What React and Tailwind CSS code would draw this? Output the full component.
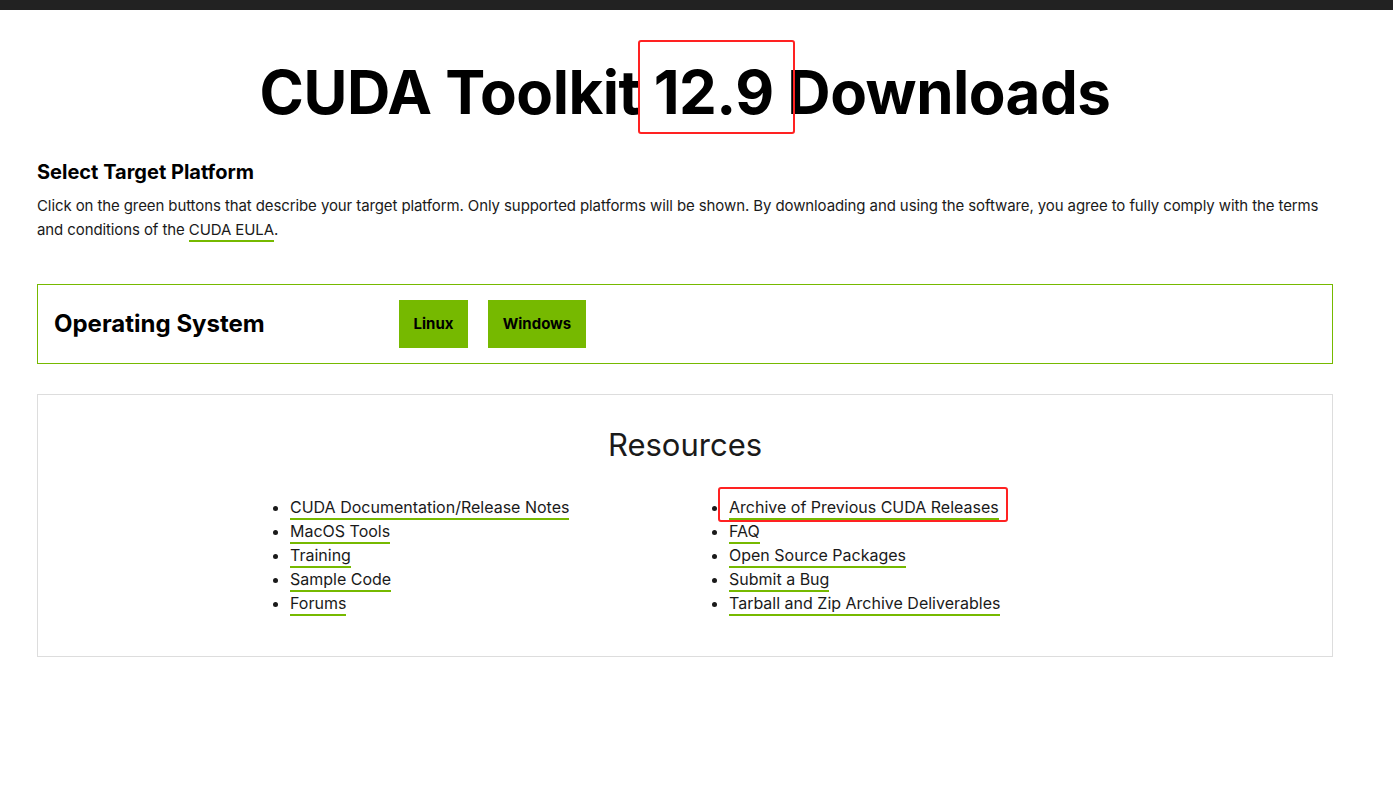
import React from 'react';

const left = [
  'CUDA Documentation/Release Notes',
  'MacOS Tools',
  'Training',
  'Sample Code',
  'Forums',
];

const right = [
  'Archive of Previous CUDA Releases',
  'FAQ',
  'Open Source Packages',
  'Submit a Bug',
  'Tarball and Zip Archive Deliverables',
];

function LinkList({ items, highlight }) {
  return (
    <ul className="list-disc w-[439px] pl-0 text-[16px] leading-6 text-[#1a1a1a]">
      {items.map((t, i) => (
        <li key={i} className="relative">
          <a href="#" className="border-b-2 border-[#76b900] pb-[1px]">{t}</a>
          {highlight === i && (
            <span className="absolute left-[-11px] top-[-8px] w-[290px] h-[35px] border-2 border-[#f22] rounded-[3px]" />
          )}
        </li>
      ))}
    </ul>
  );
}

export default function App() {
  return (
    <div className="min-h-[805px] bg-white font-['Inter',sans-serif] text-[#1a1a1a]">
      <div className="h-[10px] bg-[#222]" />
      <div className="ml-[37px] w-[1296px]">
        <h1 className="mt-[45px] text-center text-[60px] font-bold leading-[74px] tracking-[-0.5px] text-black">
          CUDA Toolkit
          <span className="relative">
            {' '}12.9{' '}
            <span className="absolute left-[-2px] right-[-8px] top-[-16px] h-[94px] border-2 border-[#f22] rounded-[3px]" />
          </span>
          Downloads
        </h1>

        <h2 className="mt-[31px] text-[20px] font-bold leading-6 text-black">Select Target Platform</h2>
        <p className="mt-[10px] text-[15px] leading-6 tracking-[-0.1px] text-[#1a1a1a]">
          Click on the green buttons that describe your target platform. Only supported platforms will be shown. By downloading and using the software, you agree to fully comply with the terms and conditions of the{' '}
          <a href="#" className="border-b-2 border-[#76b900] pb-[1px]">CUDA EULA</a>.
        </p>

        <div className="mt-[42px] h-[80px] border border-[#76b900] flex items-center">
          <div className="w-[361px] pl-[16px] text-[24px] font-bold text-black">Operating System</div>
          <div className="flex gap-5">
            <button className="h-12 w-[69px] bg-[#76b900] text-[15px] font-bold text-black">Linux</button>
            <button className="h-12 w-[98px] bg-[#76b900] text-[15px] font-bold text-black">Windows</button>
          </div>
        </div>

        <div className="mt-[30px] h-[263px] border border-[#ddd]">
          <h3 className="mt-[32px] text-center text-[31px] leading-9 text-[#1a1a1a]">Resources</h3>
          <div className="mt-[32px] flex pl-[252px]">
            <LinkList items={left} />
            <LinkList items={right} highlight={0} />
          </div>
        </div>
      </div>
    </div>
  );
}
